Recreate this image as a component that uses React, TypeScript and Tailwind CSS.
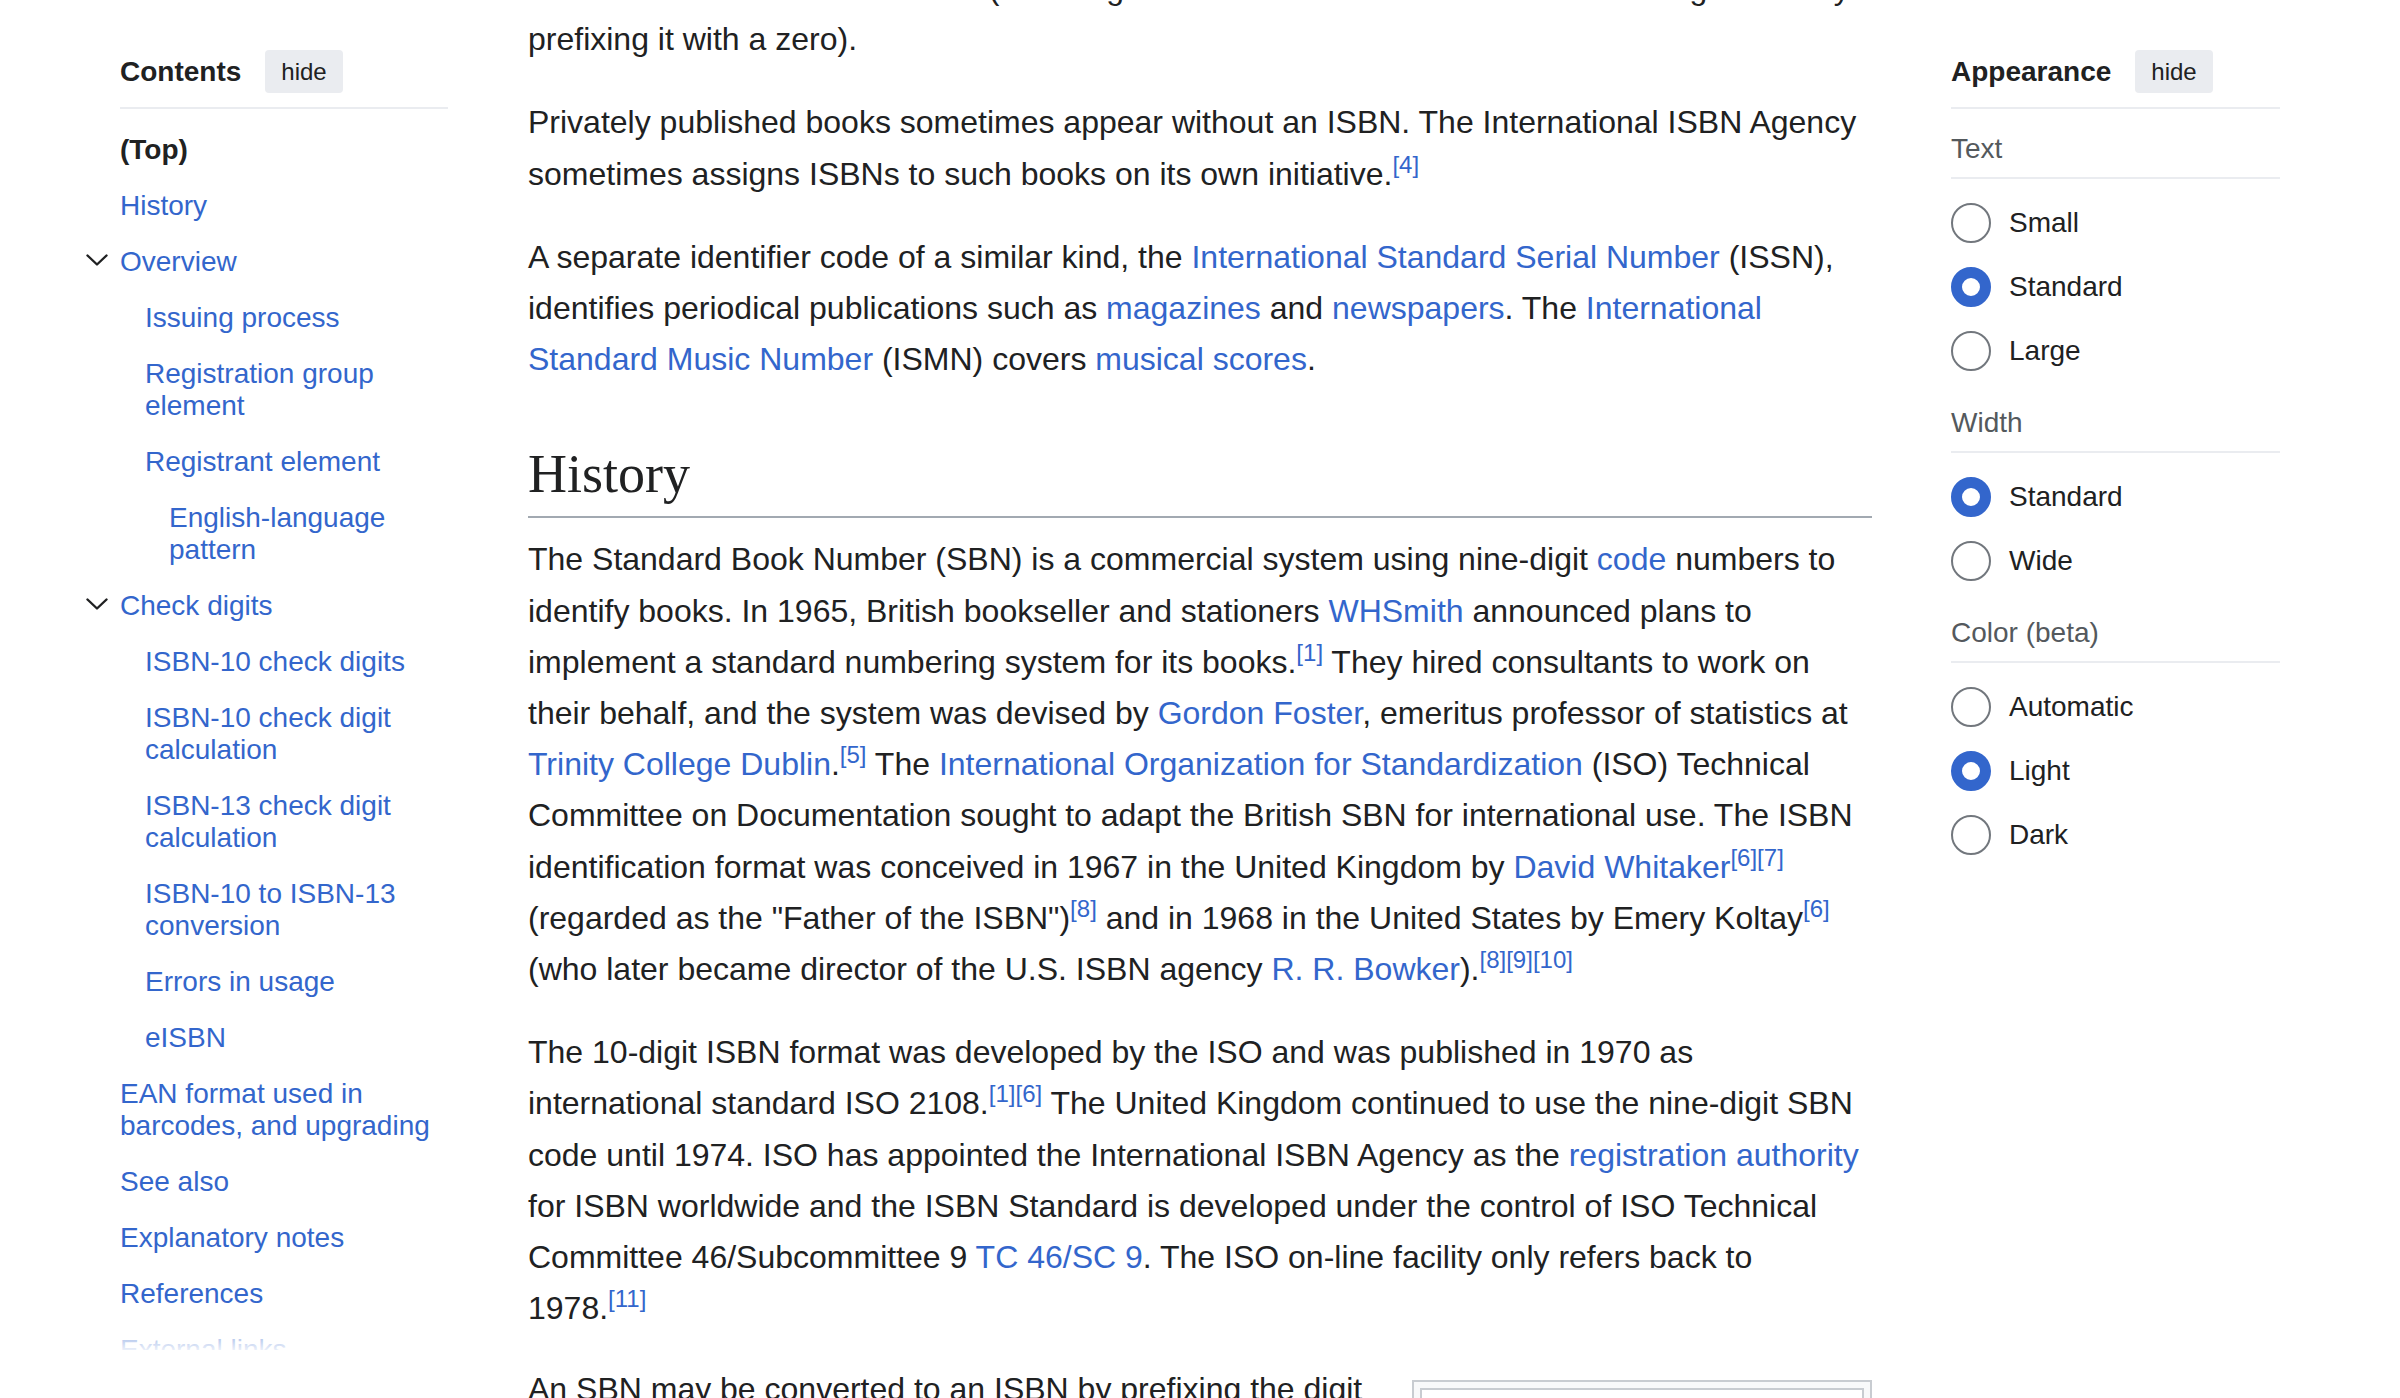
import type { ReactNode } from "react";

type TocItem = { label: string; level: 0 | 1 | 2; bold?: boolean; toggle?: boolean };

const TOC: TocItem[] = [
  { label: "(Top)", level: 0, bold: true },
  { label: "History", level: 0 },
  { label: "Overview", level: 0, toggle: true },
  { label: "Issuing process", level: 1 },
  { label: "Registration group element", level: 1 },
  { label: "Registrant element", level: 1 },
  { label: "English-language pattern", level: 2 },
  { label: "Check digits", level: 0, toggle: true },
  { label: "ISBN-10 check digits", level: 1 },
  { label: "ISBN-10 check digit calculation", level: 1 },
  { label: "ISBN-13 check digit calculation", level: 1 },
  { label: "ISBN-10 to ISBN-13 conversion", level: 1 },
  { label: "Errors in usage", level: 1 },
  { label: "eISBN", level: 1 },
  { label: "EAN format used in barcodes, and upgrading", level: 0 },
  { label: "See also", level: 0 },
  { label: "Explanatory notes", level: 0 },
  { label: "References", level: 0 },
  { label: "External links", level: 0 },
];

const INDENT = ["pl-0", "pl-[25px]", "pl-[49px]"];

const APPEARANCE = [
  { title: "Text", options: ["Small", "Standard", "Large"], selected: "Standard" },
  { title: "Width", options: ["Standard", "Wide"], selected: "Standard" },
  { title: "Color (beta)", options: ["Automatic", "Light", "Dark"], selected: "Light" },
];

function A({ children }: { children: ReactNode }) {
  return <a className="text-[#3366cc] cursor-pointer">{children}</a>;
}

function Ref({ n }: { n: number }) {
  return <sup className="text-[#3366cc]">[{n}]</sup>;
}

function Chevron() {
  return (
    <svg width="22" height="12" viewBox="0 0 22 12" fill="none" aria-hidden>
      <path d="M1.5 1.5 L11 10.5 L20.5 1.5" stroke="#202122" strokeWidth="2.4" strokeLinecap="round" strokeLinejoin="round" />
    </svg>
  );
}

function PanelHeader({ title }: { title: string }) {
  return (
    <div className="flex items-center gap-[24px] pt-[50px] pb-[14px] border-b-2 border-[#eaecf0]">
      <h2 className="text-[28px] font-bold leading-[32px] text-[#202122]">{title}</h2>
      <button
        type="button"
        className="h-[43px] px-[16px] rounded-[4px] bg-[#eaecf0] text-[24px] leading-none text-[#202122]"
      >
        hide
      </button>
    </div>
  );
}

function Radio({ label, checked }: { label: string; checked: boolean }) {
  return (
    <div className="flex items-center gap-[18px] h-[40px]">
      <span
        className={
          checked
            ? "w-[40px] h-[40px] shrink-0 rounded-full border-[11px] border-[#3366cc] bg-white"
            : "w-[40px] h-[40px] shrink-0 rounded-full border-2 border-[#72777d] bg-white"
        }
      />
      <span className="text-[28px] leading-[32px] text-[#202122]">{label}</span>
    </div>
  );
}

function Contents() {
  return (
    <aside className="relative w-[448px] pl-[120px] h-[1350px] shrink-0 overflow-hidden">
      <PanelHeader title="Contents" />
      <ul className="pt-[13px]">
        {TOC.map((item) => (
          <li key={item.label} className={`${INDENT[item.level]} py-[12px]`}>
            {item.toggle ? (
              <div className="flex -ml-[34px]">
                <span className="w-[34px] shrink-0 pt-[8px]">
                  <Chevron />
                </span>
                <a className="text-[28px] leading-[32px] text-[#3366cc]">{item.label}</a>
              </div>
            ) : (
              <a
                className={`block text-[28px] leading-[32px] ${
                  item.bold ? "font-bold text-[#202122]" : "text-[#3366cc]"
                }`}
              >
                {item.label}
              </a>
            )}
          </li>
        ))}
      </ul>
      <div className="pointer-events-none absolute inset-x-0 bottom-0 h-[42px] bg-gradient-to-b from-white/0 to-white/90" />
    </aside>
  );
}

function Appearance() {
  return (
    <aside className="ml-[79px] w-[329px] shrink-0">
      <PanelHeader title="Appearance" />
      <div className="flex flex-col gap-[36px] pt-[24px]">
        {APPEARANCE.map((section) => (
          <section key={section.title}>
            <h3 className="text-[28px] leading-[32px] text-[#54595d] pb-[12px] border-b-2 border-[#eaecf0]">
              {section.title}
            </h3>
            <div className="flex flex-col gap-[24px] pt-[24px]">
              {section.options.map((opt) => (
                <Radio key={opt} label={opt} checked={opt === section.selected} />
              ))}
            </div>
          </section>
        ))}
      </div>
    </aside>
  );
}

function Article() {
  const p = "text-[32px] leading-[51.2px] text-[#202122] whitespace-nowrap";
  return (
    <main className="ml-[80px] w-[1344px] shrink-0 flex flex-col">
      <p className={`${p} -mt-[37px] mb-[32px]`}>
        international standard ISO 2108 (the 9-digit SBN code can be converted to a 10-digit ISBN by
        <br />
        prefixing it with a zero).
      </p>
      <p className={`${p} mb-[32px]`}>
        Privately published books sometimes appear without an ISBN. The International ISBN Agency
        <br />
        sometimes assigns ISBNs to such books on its own initiative.
        <Ref n={4} />
      </p>
      <p className={p}>
        A separate identifier code of a similar kind, the <A>International Standard Serial Number</A> (ISSN),
        <br />
        identifies periodical publications such as <A>magazines</A> and <A>newspapers</A>. The <A>International</A>
        <br />
        <A>Standard Music Number</A> (ISMN) covers <A>musical scores</A>.
      </p>

      <h2 className="mt-[54px] mb-[16px] pb-[7px] border-b-2 border-[#a2a9b1] font-['Liberation_Serif','Times_New_Roman',serif] text-[54px] leading-[70px] text-[#202122]">
        History
      </h2>

      <p className={`${p} mb-[32px]`}>
        The Standard Book Number (SBN) is a commercial system using nine-digit <A>code</A> numbers to
        <br />
        identify books. In 1965, British bookseller and stationers <A>WHSmith</A> announced plans to
        <br />
        implement a standard numbering system for its books.
        <Ref n={1} /> They hired consultants to work on
        <br />
        their behalf, and the system was devised by <A>Gordon Foster</A>, emeritus professor of statistics at
        <br />
        <A>Trinity College Dublin</A>.<Ref n={5} /> The <A>International Organization for Standardization</A> (ISO) Technical
        <br />
        Committee on Documentation sought to adapt the British SBN for international use. The ISBN
        <br />
        identification format was conceived in 1967 in the United Kingdom by <A>David Whitaker</A>
        <Ref n={6} />
        <Ref n={7} />
        <br />
        (regarded as the "Father of the ISBN")<Ref n={8} /> and in 1968 in the United States by Emery Koltay
        <Ref n={6} />
        <br />
        (who later became director of the U.S. ISBN agency <A>R. R. Bowker</A>).<Ref n={8} />
        <Ref n={9} />
        <Ref n={10} />
      </p>

      <p className={`${p} mb-[30px]`}>
        The 10-digit ISBN format was developed by the ISO and was published in 1970 as
        <br />
        international standard ISO 2108.<Ref n={1} />
        <Ref n={6} /> The United Kingdom continued to use the nine-digit SBN
        <br />
        code until 1974. ISO has appointed the International ISBN Agency as the <A>registration authority</A>
        <br />
        for ISBN worldwide and the ISBN Standard is developed under the control of ISO Technical
        <br />
        Committee 46/Subcommittee 9 <A>TC 46/SC 9</A>. The ISO on-line facility only refers back to
        <br />
        1978.<Ref n={11} />
      </p>

      <div className="flex items-start justify-between">
        <p className={p}>An SBN may be converted to an ISBN by prefixing the digit</p>
        <figure className="mt-[16px] w-[460px] border-2 border-[#c8ccd1] bg-[#f8f9fa] p-[6px]">
          <div className="border-2 border-[#c8ccd1] bg-white px-[16px] pt-[4px] pb-[40px]">
            <p className="text-[22px] leading-[30px] font-bold text-[#54595d]">
              Table 1: Print run of ISBN registrations, 2020
            </p>
          </div>
        </figure>
      </div>
    </main>
  );
}

export default function App() {
  return (
    <div className="h-[1398px] w-[2400px] overflow-hidden bg-white font-['Liberation_Sans',Arial,Helvetica,sans-serif]">
      <div className="flex items-start">
        <Contents />
        <Article />
        <Appearance />
      </div>
    </div>
  );
}
